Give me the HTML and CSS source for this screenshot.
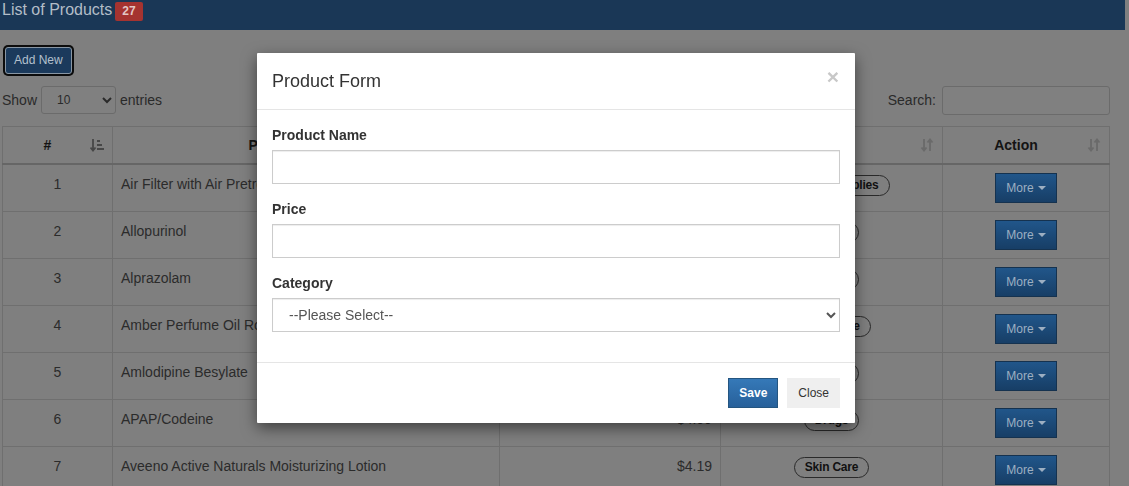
FILE: index.html
```html
<!DOCTYPE html>
<html lang="en">
<head>
<meta charset="utf-8">
<title>List of Products</title>
<link rel="stylesheet" href="styles.css">
</head>
<body>
<header class="topbar">
  <span class="title">List of Products</span>
  <span class="count">27</span>
</header>

<main class="content">
  <button class="btn-add" type="button">Add New</button>

  <div class="controls">
    <label class="length">Show
      <select class="length-select"><option>10</option><option>25</option><option>50</option></select>
      entries</label>
    <label class="search">Search: <input class="search-input" type="text"></label>
  </div>

  <table class="grid">
    <colgroup>
      <col class="c-num"><col class="c-name"><col class="c-price"><col class="c-cat"><col class="c-act">
    </colgroup>
    <thead>
      <tr>
        <th><div class="th-in"><span class="th-text">#</span>
          <svg class="sort sort-on" viewBox="0 0 14 14" width="14" height="14"><path d="M3 1v11M0.5 9.5 3 12.5 5.5 9.5" fill="none" stroke="currentColor" stroke-width="1.8"/><rect x="7" y="2" width="3" height="2" fill="currentColor"/><rect x="7" y="6" width="5" height="2" fill="currentColor"/><rect x="7" y="10" width="7" height="2" fill="currentColor"/></svg></div></th>
        <th><div class="th-in"><span class="th-text">Product Name</span>
          <svg class="sort" viewBox="0 0 14 14" width="14" height="14"><path d="M4 1v11M1.5 9.5 4 12.5 6.5 9.5M10 13V2M7.5 4.5 10 1.5 12.5 4.5" fill="none" stroke="currentColor" stroke-width="1.8"/></svg></div></th>
        <th><div class="th-in"><span class="th-text">Price</span>
          <svg class="sort" viewBox="0 0 14 14" width="14" height="14"><path d="M4 1v11M1.5 9.5 4 12.5 6.5 9.5M10 13V2M7.5 4.5 10 1.5 12.5 4.5" fill="none" stroke="currentColor" stroke-width="1.8"/></svg></div></th>
        <th><div class="th-in"><span class="th-text">Category</span>
          <svg class="sort" viewBox="0 0 14 14" width="14" height="14"><path d="M4 1v11M1.5 9.5 4 12.5 6.5 9.5M10 13V2M7.5 4.5 10 1.5 12.5 4.5" fill="none" stroke="currentColor" stroke-width="1.8"/></svg></div></th>
        <th><div class="th-in"><span class="th-text">Action</span>
          <svg class="sort" viewBox="0 0 14 14" width="14" height="14"><path d="M4 1v11M1.5 9.5 4 12.5 6.5 9.5M10 13V2M7.5 4.5 10 1.5 12.5 4.5" fill="none" stroke="currentColor" stroke-width="1.8"/></svg></div></th>
      </tr>
    </thead>
    <tbody>
      <tr><td class="num">1</td><td>Air Filter with Air Pretreatment</td><td class="price">$12.99</td><td class="cat"><span class="pill">Medical Supplies</span></td><td class="act"><button class="btn-more" type="button">More <span class="caret"></span></button></td></tr>
      <tr><td class="num">2</td><td>Allopurinol</td><td class="price">$3.25</td><td class="cat"><span class="pill">Drugs</span></td><td class="act"><button class="btn-more" type="button">More <span class="caret"></span></button></td></tr>
      <tr><td class="num">3</td><td>Alprazolam</td><td class="price">$6.40</td><td class="cat"><span class="pill">Drugs</span></td><td class="act"><button class="btn-more" type="button">More <span class="caret"></span></button></td></tr>
      <tr><td class="num">4</td><td>Amber Perfume Oil Roll-On</td><td class="price">$8.75</td><td class="cat"><span class="pill">Fragrance</span></td><td class="act"><button class="btn-more" type="button">More <span class="caret"></span></button></td></tr>
      <tr><td class="num">5</td><td>Amlodipine Besylate</td><td class="price">$2.89</td><td class="cat"><span class="pill">Drugs</span></td><td class="act"><button class="btn-more" type="button">More <span class="caret"></span></button></td></tr>
      <tr><td class="num">6</td><td>APAP/Codeine</td><td class="price">$4.99</td><td class="cat"><span class="pill">Drugs</span></td><td class="act"><button class="btn-more" type="button">More <span class="caret"></span></button></td></tr>
      <tr><td class="num">7</td><td>Aveeno Active Naturals Moisturizing Lotion</td><td class="price">$4.19</td><td class="cat"><span class="pill">Skin Care</span></td><td class="act"><button class="btn-more" type="button">More <span class="caret"></span></button></td></tr>
    </tbody>
  </table>
</main>

<div class="modal-layer">
  <div class="modal">
    <div class="modal-header">
      <h4 class="modal-title">Product Form</h4>
      <button class="modal-close" type="button">&times;</button>
    </div>
    <div class="modal-body">
      <div class="form-group">
        <label class="form-label">Product Name</label>
        <input class="form-control" type="text">
      </div>
      <div class="form-group">
        <label class="form-label">Price</label>
        <input class="form-control" type="text">
      </div>
      <div class="form-group">
        <label class="form-label">Category</label>
        <select class="form-control form-select"><option>--Please Select--</option></select>
      </div>
    </div>
    <div class="modal-footer">
      <button class="btn-save" type="button">Save</button>
      <button class="btn-close" type="button">Close</button>
    </div>
  </div>
</div>
</body>
</html>
```

FILE: styles.css
```css
* { box-sizing: border-box; }

html, body {
  margin: 0;
  padding: 0;
}

body {
  background: #7f7f7f;
  font-family: "Liberation Sans", Arial, sans-serif;
  font-size: 14px;
  line-height: 20px;
  color: #2a2a2a;
  overflow: hidden;
  height: 486px;
}

/* top bar */
.topbar {
  display: flex;
  align-items: flex-start;
  height: 30px;
  padding: 0 0 0 2px;
  background: #1a3756;
  width: 1125px;
}
.title {
  font-size: 16px;
  line-height: 19px;
  color: #b3bdc7;
}
.count {
  margin: 2px 0 0 3px;
  height: 19px;
  padding: 0 7px;
  background: #a53330;
  color: #e3c6c5;
  font-size: 12px;
  font-weight: bold;
  line-height: 19px;
  border-radius: 2px;
}

/* content */
.content {
  padding: 0 0 0 2px;
  width: 1112px;
}
.btn-add {
  display: block;
  margin: 17px 0 0 3px;
  padding: 5px 8px;
  font-family: inherit;
  font-size: 12px;
  line-height: 15px;
  color: #b3c0cd;
  background: #1b3a5c;
  border: 1px solid #8896a4;
  border-radius: 3px;
  box-shadow: 0 0 0 2px #0c0c0c;
}

.controls {
  display: flex;
  justify-content: space-between;
  align-items: center;
  margin-top: 12px;
  height: 28px;
  width: 1108px;
}
.length, .search {
  display: flex;
  align-items: center;
  color: #2a2a2a;
}
.length-select {
  margin: 0 4px 0 4px;
  width: 75px;
  height: 28px;
  padding: 0 0 0 11px;
  font-family: inherit;
  font-size: 12px;
  color: #2a2a2a;
  background: #808080;
  border: 1px solid #6b6b6b;
  border-radius: 3px;
}
.search-input {
  margin-left: 6px;
  width: 168px;
  height: 29px;
  background: #808080;
  border: 1px solid #6b6b6b;
  border-radius: 3px;
}

/* table */
.grid {
  margin-top: 12px;
  width: 1107px;
  border-collapse: collapse;
  table-layout: fixed;
}
.c-num { width: 110px; }
.c-name { width: 387px; }
.c-price { width: 221px; }
.c-cat { width: 222px; }
.c-act { width: 167px; }

.grid th, .grid td {
  border: 1px solid #6f6f6f;
  padding: 8px;
  vertical-align: top;
}
.grid th {
  color: #141414;
  font-weight: bold;
  border-bottom: 2px solid #666;
}
.grid td {
  padding: 9px 8px 7px;
}
.grid td.act {
  padding: 8px;
}
.th-in {
  display: flex;
  align-items: center;
  gap: 6px;
}
.th-text {
  flex: 1;
  text-align: center;
}
.sort {
  flex: none;
  color: #6a6a6a;
}
.sort-on { color: #474747; }

.grid td { color: #2b2b2b; }
.num { text-align: center; }
.price { text-align: right; }
.cat { text-align: center; }
.act { text-align: center; }

.pill {
  display: inline-block;
  margin-top: 0;
  padding: 1px 10px;
  border: 1px solid #2a2a2a;
  border-radius: 11px;
  font-size: 12px;
  font-weight: bold;
  line-height: 17px;
  color: #111;
  letter-spacing: -0.2px;
}

.btn-more {
  display: inline-flex;
  align-items: center;
  gap: 4px;
  height: 30px;
  padding: 0 10px;
  font-family: inherit;
  font-size: 12px;
  color: #9dafc2;
  background: linear-gradient(#21568a, #173e66);
  border: 1px solid #15324f;
  border-radius: 0;
}
.caret {
  width: 0;
  height: 0;
  border-top: 4px solid #9dafc2;
  border-left: 4px solid transparent;
  border-right: 4px solid transparent;
}

/* modal */
.modal-layer {
  position: fixed;
  inset: 0;
}
.modal {
  position: absolute;
  left: 257px;
  top: 53px;
  width: 598px;
  background: #fff;
  border-radius: 1px;
  box-shadow: 0 5px 15px rgba(0, 0, 0, 0.5);
}
.modal-header {
  display: flex;
  justify-content: space-between;
  align-items: flex-start;
  padding: 15px;
  border-bottom: 1px solid #e5e5e5;
}
.modal-title {
  margin: 0;
  font-size: 18px;
  font-weight: normal;
  line-height: 26px;
  color: #333;
}
.modal-close {
  margin: -2px 1px 0 0;
  padding: 0;
  background: none;
  border: 0;
  font-family: inherit;
  font-size: 21px;
  font-weight: bold;
  line-height: 21px;
  color: #c8c8c8;
}
.modal-body {
  padding: 15px;
}
.form-group {
  display: flex;
  flex-direction: column;
  margin-bottom: 15px;
}
.form-label {
  margin-bottom: 5px;
  font-weight: bold;
  color: #333;
}
.form-control {
  height: 34px;
  width: 100%;
  padding: 6px 12px;
  font-family: inherit;
  font-size: 14px;
  color: #555;
  background: #fff;
  border: 1px solid #ccc;
  border-radius: 0;
  box-shadow: inset 0 1px 1px rgba(0, 0, 0, 0.075);
}
.form-select {
  padding-left: 12px;
}
.modal-footer {
  display: flex;
  justify-content: flex-end;
  gap: 9px;
  padding: 15px;
  border-top: 1px solid #e5e5e5;
}
.btn-save, .btn-close {
  height: 30px;
  font-family: inherit;
  font-size: 12px;
  line-height: 18px;
  border-radius: 0;
}
.btn-save {
  padding: 0 10px;
  font-weight: bold;
  color: #fff;
  background: linear-gradient(#3579b8, #27609a);
  border: 1px solid #245580;
}
.btn-close {
  padding: 0 10px;
  color: #333;
  background: #efefef;
  border: 1px solid #efefef;
}
```
